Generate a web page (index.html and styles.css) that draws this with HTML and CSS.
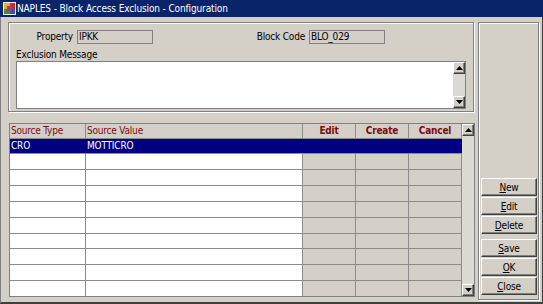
FILE: index.html
```html
<!DOCTYPE html>
<html lang="en">
<head>
<meta charset="utf-8">
<title>NAPLES - Block Access Exclusion - Configuration</title>
<link rel="stylesheet" href="styles.css">
</head>
<body>
<div class="window">
  <div class="titlebar">
    <svg class="app-icon" width="13" height="13" viewBox="0 0 13 13">
      <rect x="0" y="0" width="13" height="13" fill="#f4f4f4"/>
      <rect x="1" y="1" width="6" height="6" fill="#e8b020"/>
      <rect x="7" y="1" width="5" height="6" fill="#d02828"/>
      <rect x="1" y="7" width="6" height="5" fill="#2c9a3c"/>
      <rect x="7" y="7" width="5" height="5" fill="#3050c8"/>
      <rect x="4" y="4" width="5" height="5" fill="#b03090"/>
    </svg>
    <span class="title-text">NAPLES - Block Access Exclusion - Configuration</span>
  </div>
  <div class="main">
    <div class="left">
      <div class="group">
        <div class="fields">
          <span class="lbl lbl-prop">Property</span>
          <span class="field field-prop">IPKK</span>
          <span class="lbl lbl-block">Block Code</span>
          <span class="field field-block">BLO_029</span>
        </div>
        <div class="msg-label">Exclusion Message</div>
        <div class="textarea">
          <div class="vscroll">
            <div class="sbtn"><svg width="7" height="4" viewBox="0 0 7 4"><polygon points="3.5,0 7,4 0,4" fill="#000"/></svg></div>
            <div class="track"></div>
            <div class="sbtn"><svg width="7" height="4" viewBox="0 0 7 4"><polygon points="0,0 7,0 3.5,4" fill="#000"/></svg></div>
          </div>
        </div>
      </div>
      <div class="grid">
        <div class="rows">
          <div class="row head">
            <div class="cell">Source Type</div>
            <div class="cell">Source Value</div>
            <div class="cell c">Edit</div>
            <div class="cell c">Create</div>
            <div class="cell c">Cancel</div>
          </div>
          <div class="row short sel">
            <div class="cell">CRO</div>
            <div class="cell">MOTTICRO</div>
            <div class="cell"></div>
            <div class="cell"></div>
            <div class="cell"></div>
          </div>
          <div class="row"><div class="cell"></div><div class="cell"></div><div class="cell g"></div><div class="cell g"></div><div class="cell g"></div></div>
          <div class="row"><div class="cell"></div><div class="cell"></div><div class="cell g"></div><div class="cell g"></div><div class="cell g"></div></div>
          <div class="row"><div class="cell"></div><div class="cell"></div><div class="cell g"></div><div class="cell g"></div><div class="cell g"></div></div>
          <div class="row"><div class="cell"></div><div class="cell"></div><div class="cell g"></div><div class="cell g"></div><div class="cell g"></div></div>
          <div class="row"><div class="cell"></div><div class="cell"></div><div class="cell g"></div><div class="cell g"></div><div class="cell g"></div></div>
          <div class="row short"><div class="cell"></div><div class="cell"></div><div class="cell g"></div><div class="cell g"></div><div class="cell g"></div></div>
          <div class="row"><div class="cell"></div><div class="cell"></div><div class="cell g"></div><div class="cell g"></div><div class="cell g"></div></div>
          <div class="row"><div class="cell"></div><div class="cell"></div><div class="cell g"></div><div class="cell g"></div><div class="cell g"></div></div>
          <div class="row short"><div class="cell"></div><div class="cell"></div><div class="cell g"></div><div class="cell g"></div><div class="cell g"></div></div>
        </div>
        <div class="vscroll">
          <div class="sbtn"><svg width="7" height="4" viewBox="0 0 7 4"><polygon points="3.5,0 7,4 0,4" fill="#000"/></svg></div>
          <div class="track"></div>
          <div class="sbtn"><svg width="7" height="4" viewBox="0 0 7 4"><polygon points="0,0 7,0 3.5,4" fill="#000"/></svg></div>
        </div>
      </div>
    </div>
    <div class="side">
      <div class="btn-group">
        <button class="btn"><u>N</u>ew</button>
        <button class="btn"><u>E</u>dit</button>
        <button class="btn"><u>D</u>elete</button>
      </div>
      <div class="btn-group">
        <button class="btn"><u>S</u>ave</button>
        <button class="btn"><u>O</u>K</button>
        <button class="btn"><u>C</u>lose</button>
      </div>
    </div>
  </div>
</div>
</body>
</html>
```

FILE: styles.css
```css
* { box-sizing: border-box; }
html, body { margin: 0; padding: 0; }
body {
  width: 543px;
  height: 304px;
  overflow: hidden;
  background: #d4d0c8;
  font-family: "DejaVu Sans Condensed", "Liberation Sans", Arial, sans-serif;
  font-size: 10px;
  letter-spacing: -0.2px;
  color: #000;
}
.window {
  width: 543px;
  height: 304px;
  display: flex;
  flex-direction: column;
  background: #d4d0c8;
}
.titlebar {
  flex: 0 0 17px;
  height: 17px;
  background: #0a246a;
  color: #fff;
  display: flex;
  align-items: center;
  gap: 1px;
  padding-left: 3px;
  white-space: nowrap;
  letter-spacing: -0.13px;
}
.app-icon { display: block; flex: 0 0 13px; }
.title-text { line-height: 17px; }

.main {
  flex: 1;
  min-height: 0;
  display: flex;
  gap: 3px;
  padding: 5px 3px 2px 7px;
  border-left: 1px solid #808080;
  border-right: 1px solid #404040;
  border-bottom: 2px solid #404040;
}
.left {
  flex: 0 0 467px;
  display: flex;
  flex-direction: column;
}
.group {
  width: 466px;
  height: 90px;
  border: 1px solid #808080;
  box-shadow: inset 1px 1px 0 #fff, 1px 1px 0 #fff;
  padding-top: 7px;
}
.fields {
  display: flex;
  align-items: center;
  height: 14px;
}
.lbl { text-align: right; line-height: 14px; white-space: nowrap; }
.lbl-prop { width: 64px; margin-right: 4px; }
.lbl-block { width: 152px; margin-right: 4px; }
.field {
  height: 14px;
  line-height: 12px;
  border: 1px solid #808080;
  background: #d4d0c8;
  padding-left: 1px;
  white-space: nowrap;
}
.field-prop { width: 76px; }
.field-block { width: 76px; }
.msg-label {
  margin-top: 4px;
  line-height: 13px;
  padding-left: 7px;
}
.textarea {
  margin-left: 7px;
  width: 450px;
  height: 48px;
  border: 1px solid #808080;
  background: #fff;
  display: flex;
  justify-content: flex-end;
}

.vscroll {
  flex: 0 0 12px;
  width: 12px;
  display: flex;
  flex-direction: column;
  background: #dcdad4;
}
.sbtn {
  flex: 0 0 12px;
  height: 12px;
  background: #d4d0c8;
  border-top: 1px solid #fff;
  border-left: 1px solid #fff;
  border-right: 1px solid #404040;
  border-bottom: 1px solid #404040;
  box-shadow: inset -1px -1px 0 #808080;
  display: flex;
  align-items: center;
  justify-content: center;
}
.sbtn svg { display: block; }
.track { flex: 1; }

.grid {
  margin: 11px 0 0 1px;
  width: 466px;
  height: 174px;
  border: 1px solid #808080;
  background: #fff;
  display: flex;
}
.rows { flex: 0 0 452px; width: 452px; }
.row {
  display: grid;
  grid-template-columns: 76px 217px 53px 53px 53px;
  height: 16px;
  border-bottom: 1px solid #8c8c8c;
}
.row.short { height: 15px; }
.row:last-child { border-bottom: none; }
.cell {
  border-right: 1px solid #8c8c8c;
  padding-left: 1px;
  line-height: 14px;
  white-space: nowrap;
  overflow: hidden;
}
.cell.g { background: #d4d0c8; }
.head { height: 15px; background: #d4d0c8; color: #7a0c0c; }
.head .c { text-align: center; font-weight: bold; padding-left: 0; }
.sel { background: #000080; color: #fff; }
.sel .cell { border-right-color: #000080; }

.side {
  flex: 0 0 61px;
  width: 61px;
  border: 1px solid #808080;
  box-shadow: inset 1px 1px 0 #fff, 1px 1px 0 #fff;
  display: flex;
  flex-direction: column;
  justify-content: flex-end;
  gap: 5px;
  padding: 0 1px 4px 2px;
}
.btn-group {
  display: flex;
  flex-direction: column;
  gap: 1px;
}
.btn {
  width: 56px;
  height: 18px;
  margin: 0;
  padding: 0;
  font: inherit;
  letter-spacing: inherit;
  color: #000;
  line-height: 15px;
  text-align: center;
  background: #d4d0c8;
  border-top: 1px solid #fff;
  border-left: 1px solid #fff;
  border-right: 1px solid #404040;
  border-bottom: 1px solid #404040;
  box-shadow: inset -1px -1px 0 #808080;
  border-radius: 0;
}
.btn u { text-decoration: underline; }
```
